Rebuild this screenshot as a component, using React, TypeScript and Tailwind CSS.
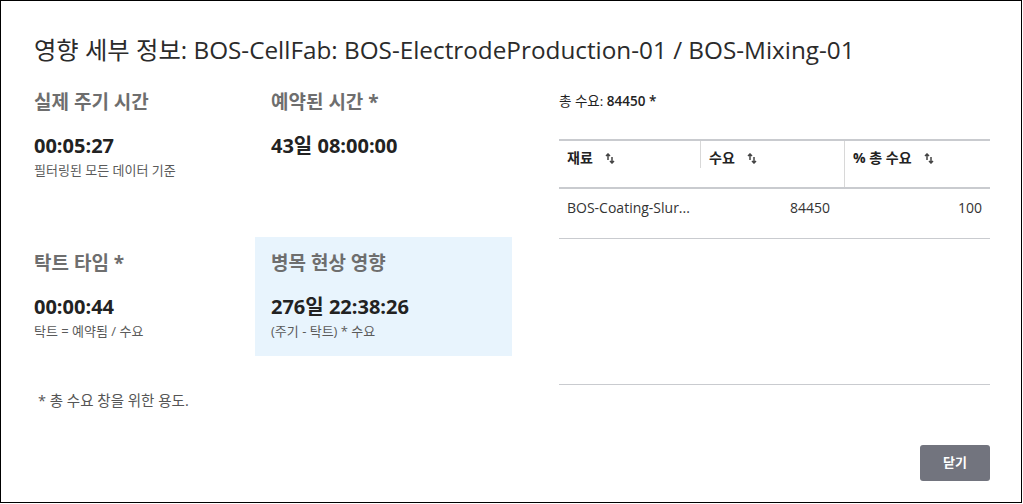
import React from "react";

const font = { fontFamily: '"Open Sans", "Noto Sans CJK KR", sans-serif' };

function SortIcon() {
  return (
    <svg width="10" height="11" viewBox="0 0 10 11" className="inline-block ml-[12px] mt-[1px]" fill="none">
      <path d="M3 1 V7 M1 3 L3 1 L5 3" stroke="#444" strokeWidth="1.5" />
      <path d="M7 4 V10 M5 8 L7 10 L9 8" stroke="#444" strokeWidth="1.5" />
    </svg>
  );
}

function Cell({
  title,
  value,
  sub,
  highlight,
}: {
  title: string;
  value: string;
  sub?: string;
  highlight?: boolean;
}) {
  return (
    <div className={`px-4 pt-[13px] ${highlight ? "bg-[#e8f4fd]" : ""}`}>
      <div className="text-[19px] font-bold text-[#6e6e6e] leading-[26px]">{title}</div>
      <div className="mt-[18px] text-[20px] font-bold text-[#222] leading-[26px]">{value}</div>
      {sub && <div className="mt-[2px] text-[13px] text-[#5a5a5a] leading-[18px]">{sub}</div>}
    </div>
  );
}

export default function App() {
  return (
    <div style={font} className="w-[1022px] h-[503px] border border-black bg-white flex flex-col">
      <div className="pl-[33px] pt-[33px] text-[24.3px] leading-[32px] text-[#2b2b2b]">
        영향 세부 정보: BOS-CellFab: BOS-ElectrodeProduction-01 / BOS-Mixing-01
      </div>
      <div className="flex mt-[10px] flex-1">
        <div className="flex flex-col">
          <div className="grid grid-cols-[237px_257px] grid-rows-[161px_119px] ml-[17px]">
            <Cell title="실제 주기 시간" value="00:05:27" sub="필터링된 모든 데이터 기준" />
            <Cell title="예약된 시간 *" value="43일 08:00:00" />
            <Cell title="탁트 타임 *" value="00:00:44" sub="탁트 = 예약됨 / 수요" />
            <Cell title="병목 현상 영향" value="276일 22:38:26" sub="(주기 - 탁트) * 수요" highlight />
          </div>
          <div className="ml-[37px] mt-[35px] text-[14.5px] text-[#555] leading-[20px]">* 총 수요 창을 위한 용도.</div>
        </div>
        <div className="ml-[47px] w-[431px] flex flex-col">
          <div className="pt-[16px] text-[13.5px] text-[#222] leading-[18px]">
            총 수요: <span className="font-semibold">84450 *</span>
          </div>
          <div className="mt-[29px] h-[246px] border-t-2 border-b border-[#c9cbcf]">
            <div className="grid grid-cols-[142px_144px_145px] h-[48px] border-b-2 border-[#c9cbcf] text-[14px] font-bold text-[#222]">
              <div className="px-2 pt-[6px] border-r border-[#d8d8d8] flex items-center self-start">
                재료<SortIcon />
              </div>
              <div className="px-2 pt-[6px] border-r border-[#d8d8d8] flex items-center">
                <div className="flex items-center self-start">수요<SortIcon /></div>
              </div>
              <div className="px-2 pt-[6px] flex items-start">
                <div className="flex items-center">% 총 수요<SortIcon /></div>
              </div>
            </div>
            <div className="grid grid-cols-[142px_144px_145px] h-[50px] border-b border-[#c9cbcf] text-[14px] text-[#333] pt-[8px]">
              <div className="px-2 truncate">BOS-Coating-Slur...</div>
              <div className="pr-[15px] text-right">84450</div>
              <div className="pr-2 text-right">100</div>
            </div>
          </div>
          <div className="flex justify-end mt-[60px]">
            <button className="w-[70px] h-[36px] rounded-[3px] bg-[#72747e] text-white text-[13px] font-bold">
              닫기
            </button>
          </div>
        </div>
      </div>
    </div>
  );
}
